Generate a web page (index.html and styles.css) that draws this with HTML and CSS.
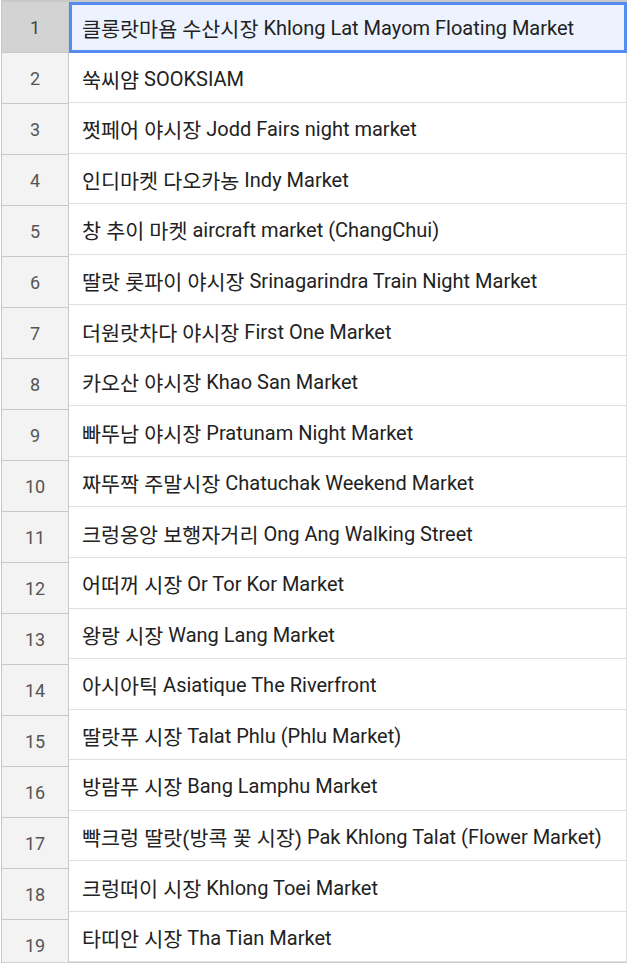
FILE: index.html
```html
<!DOCTYPE html>
<html lang="ko">
<head>
<meta charset="utf-8">
<link rel="stylesheet" href="styles.css">
</head>
<body>
<div class="sheet">
  <div class="heads">
    <div class="rh sel">1</div>
    <div class="rh">2</div>
    <div class="rh">3</div>
    <div class="rh">4</div>
    <div class="rh">5</div>
    <div class="rh">6</div>
    <div class="rh">7</div>
    <div class="rh">8</div>
    <div class="rh">9</div>
    <div class="rh">10</div>
    <div class="rh">11</div>
    <div class="rh">12</div>
    <div class="rh">13</div>
    <div class="rh">14</div>
    <div class="rh">15</div>
    <div class="rh">16</div>
    <div class="rh">17</div>
    <div class="rh">18</div>
    <div class="rh">19</div>
  </div>
  <div class="cells">
    <div class="cell active"><span class="ko">클롱랏마욤 수산시장</span>&nbsp;Khlong Lat Mayom Floating Market</div>
    <div class="cell"><span class="ko">쑥씨얌</span>&nbsp;SOOKSIAM</div>
    <div class="cell"><span class="ko">쩟페어 야시장</span>&nbsp;Jodd Fairs night market</div>
    <div class="cell"><span class="ko">인디마켓 다오카농</span>&nbsp;Indy Market</div>
    <div class="cell"><span class="ko">창 추이 마켓</span>&nbsp;aircraft market (ChangChui)</div>
    <div class="cell"><span class="ko">딸랏 롯파이 야시장</span>&nbsp;Srinagarindra Train Night Market</div>
    <div class="cell"><span class="ko">더원랏차다 야시장</span>&nbsp;First One Market</div>
    <div class="cell"><span class="ko">카오산 야시장</span>&nbsp;Khao San Market</div>
    <div class="cell"><span class="ko">빠뚜남 야시장</span>&nbsp;Pratunam Night Market</div>
    <div class="cell"><span class="ko">짜뚜짝 주말시장</span>&nbsp;Chatuchak Weekend Market</div>
    <div class="cell"><span class="ko">크렁옹앙 보행자거리</span>&nbsp;Ong Ang Walking Street</div>
    <div class="cell"><span class="ko">어떠꺼 시장</span>&nbsp;Or Tor Kor Market</div>
    <div class="cell"><span class="ko">왕랑 시장</span>&nbsp;Wang Lang Market</div>
    <div class="cell"><span class="ko">아시아틱</span>&nbsp;Asiatique The Riverfront</div>
    <div class="cell"><span class="ko">딸랏푸 시장</span>&nbsp;Talat Phlu (Phlu Market)</div>
    <div class="cell"><span class="ko">방람푸 시장</span>&nbsp;Bang Lamphu Market</div>
    <div class="cell"><span class="ko">빡크렁 딸랏(방콕 꽃 시장)</span>&nbsp;Pak Khlong Talat (Flower Market)</div>
    <div class="cell"><span class="ko">크렁떠이 시장</span>&nbsp;Khlong Toei Market</div>
    <div class="cell"><span class="ko">타띠안 시장</span>&nbsp;Tha Tian Market</div>
  </div>
</div>
</body>
</html>
```
FILE: styles.css
```css
html, body {
  margin: 0;
  padding: 0;
  background: #ffffff;
}
body {
  width: 630px;
  height: 965px;
  overflow: hidden;
  font-family: Roboto, "Noto Sans CJK KR", sans-serif;
}
.sheet {
  display: flex;
  margin-left: 1px;
  border-top: 2px solid #c8c8c8;
  border-left: 1px solid #c8c8c8;
  border-bottom: 1px solid #d0d0d0;
  width: 625px;
  height: 960px;
  overflow: hidden;
}
.heads {
  display: flex;
  flex-direction: column;
  width: 66px;
  flex: none;
  border-right: 1px solid #c8c8c8;
}
.rh {
  flex: none;
  height: 51px;
  background: #f3f3f3;
  color: #555;
  font-size: 18px;
  display: flex;
  align-items: center;
  justify-content: center;
  border-bottom: 1px solid #c8c8c8;
  box-sizing: border-box;
  padding-top: 1px;
}
.rh.sel {
  background: #d3d3d3;
  color: #444;
}
.cells {
  display: flex;
  flex-direction: column;
  flex: 1;
}
.cell {
  flex: none;
  height: 50.55px;
  color: #222;
  font-size: 20px;
  display: flex;
  align-items: center;
  padding-left: 13px;
  padding-top: 3px;
  border-right: 1px solid #e0e0e0;
  border-bottom: 1px solid #e0e0e0;
  box-sizing: border-box;
  white-space: nowrap;
}
.ko {
  font-size: 20.7px;
}
.cell.active {
  background: #edf3fe;
  border: 3px solid #548cf0;
  padding-left: 10px;
  padding-top: 1px;
}
```
